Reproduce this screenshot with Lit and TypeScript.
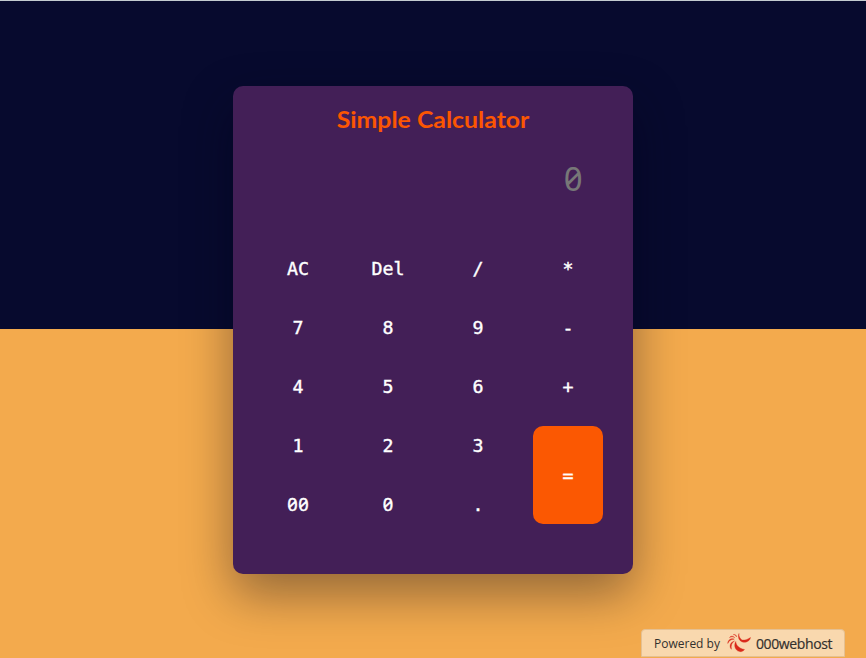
import { LitElement, html, css } from "lit";
import { customElement, state } from "lit/decorators.js";

const KEYS = ["AC", "Del", "/", "*", "7", "8", "9", "-", "4", "5", "6", "+", "1", "2", "3", "=", "00", "0", "."];

@customElement("host-badge")
class HostBadge extends LitElement {
  static styles = css`
    :host { display: flex; box-sizing: border-box; width: 204px; height: 28px; padding-left: 12px;
      align-items: center; border: 1px solid #e5c092; border-radius: 4px 4px 0 0; background: #f9d8ae;
      color: #33302d; font: 12px "Open Sans", sans-serif; white-space: nowrap; }
    .by { width: 67px; }
    svg { width: 24px; height: 20px; margin: 0 5px 0 6px; flex: none; }
    .name { font: 14px "Open Sans", sans-serif; letter-spacing: -0.38px; -webkit-text-stroke: 0.2px #33302d; }
  `;
  render() {
    return html`<span class="by">Powered by</span>
      <svg viewBox="0 0 24 20" fill="#d92a1a" stroke="#d92a1a" stroke-width="0.35">
        <path d="M12 0.5C11.6 4 13.5 5.5 15 7C17.5 7.5 21 6.3 23.5 4.5C23 8 19 10 15.5 9C12 7.9 10.5 4 12 0.5Z"/>
        <path d="M8.8 8.5C9 12 11.5 15.3 17.5 16.5C15.5 19.7 10.5 19.3 8.5 15.6C7.3 13.2 7.5 10.5 8.8 8.5Z"/>
        <path d="M7.5 8C4.8 9.5 3.8 12.5 4.4 16.3C2.2 14 2.5 9.5 7.5 8Z"/>
        <path d="M7.2 6.2C4 6 2 7.8 0.8 10.5C0.7 7.3 3.8 4.7 7.2 6.2Z"/>
        <path d="M7.8 4.8C6 3.5 4.3 3.6 2.5 4.6C3.7 2.7 6.3 2.6 7.8 4.8Z"/>
        <path d="M9.5 4C9 2.6 8 1.8 6.2 1.6C8 .9 9.8 2.2 9.5 4Z"/>
      </svg>
      <span class="name">000webhost</span>`;
  }
}

@customElement("app-root")
class AppRoot extends LitElement {
  @state() value = "";

  static styles = css`
    :host { display: flex; position: relative; box-sizing: border-box; height: 658px; padding-top: 86px;
      align-items: flex-start; justify-content: center; overflow: hidden;
      background: linear-gradient(#c3ccd0 0 1px, #070a2e 1px 329px, #f3aa4d 329px); }
    .card { box-sizing: border-box; width: 400px; height: 488px; padding: 18px 30px 0; border-radius: 10px;
      background: #431f57; box-shadow: 0 20px 50px rgba(0, 5, 24, 0.4); }
    h1 { margin: 0; height: 30px; line-height: 30px; text-align: center; color: #fb5602;
      font-family: Lato, sans-serif; font-size: 23px; font-weight: 700; transform: scaleX(1.08); }
    .display { display: flex; height: 115px; box-sizing: border-box; padding: 22px 20px 0 0;
      justify-content: flex-end; color: #777; font-size: 33px; line-height: 46px; }
    .mono { font-family: "DejaVu Sans Mono", monospace; }
    .zero { display: inline-block; width: 0.602em; text-align: center;
      font-family: "Noto Sans", sans-serif; font-feature-settings: "zero"; }
    .keys { display: grid; grid-template-columns: repeat(4, 70px); grid-auto-rows: 39px; gap: 20px; }
    button { margin: 0; padding: 0; border: 0; border-radius: 10px; background: transparent; color: #fff;
      font-size: 18.27px; line-height: 38px; -webkit-text-stroke: 0.4px #fff; }
    .equals { grid-row: span 2; padding-top: 2px; background: #fb5802; }
    .badge { position: absolute; left: 641px; top: 629px; }
  `;

  press(key: string) {
    if (key === "AC") this.value = "";
    else if (key === "Del") this.value = this.value.slice(0, -1);
    else if (key !== "=") this.value += key;
  }

  glyphs(text: string) {
    return [...text].map((c) => (c === "0" ? html`<span class="zero">0</span>` : c));
  }

  render() {
    return html`
      <main class="card">
        <h1>Simple Calculator</h1>
        <div class="display mono">${this.glyphs(this.value || "0")}</div>
        <div class="keys">
          ${KEYS.map((k) => html`<button class="mono ${k === "=" ? "equals" : ""}" @click=${() => this.press(k)}>${this.glyphs(k)}</button>`)}
        </div>
      </main>
      <host-badge class="badge"></host-badge>`;
  }
}
